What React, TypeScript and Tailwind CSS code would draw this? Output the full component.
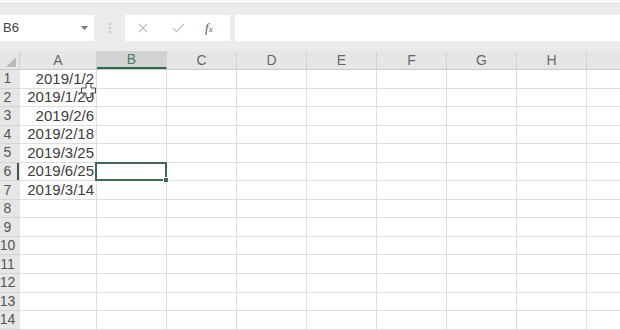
import React from "react";

const cols = [
  { name: "A", w: "w-[77px]" },
  { name: "B", w: "w-[70px]" },
  { name: "C", w: "w-[70px]" },
  { name: "D", w: "w-[70px]" },
  { name: "E", w: "w-[70px]" },
  { name: "F", w: "w-[70px]" },
  { name: "G", w: "w-[70px]" },
  { name: "H", w: "w-[70px]" },
  { name: "", w: "w-[40px]" },
];

const dates = ["2019/1/2", "2019/1/20", "2019/2/6", "2019/2/18", "2019/3/25", "2019/6/25", "2019/3/14"];

const rows = Array.from({ length: 14 }, (_, i) => i + 1);

const App: React.FC = () => {
  return (
    <div className="w-[620px] h-[330px] overflow-hidden bg-[#ebebeb] flex flex-col" style={{ fontFamily: '"Liberation Sans", Arial, sans-serif' }}>
      <div className="h-[4px] bg-[#f7f7f7] border-b border-[#dedede] shrink-0" />
      <div className="h-[11px] shrink-0" />

      {/* formula bar */}
      <div className="h-[26px] flex shrink-0">
        <div className="w-[94px] bg-white flex items-center justify-between pl-[3px] pr-[6px]">
          <span className="text-[13px] text-[#444]">B6</span>
          <svg width="7" height="4" viewBox="0 0 7 4">
            <polygon points="0,0 7,0 3.5,4" fill="#777" />
          </svg>
        </div>
        <div className="w-[31px] flex items-center justify-center">
          <div className="flex flex-col gap-[2px]">
            <span className="w-[2px] h-[2px] bg-[#c4c4c4]" />
            <span className="w-[2px] h-[2px] bg-[#c4c4c4]" />
            <span className="w-[2px] h-[2px] bg-[#c4c4c4]" />
          </div>
        </div>
        <div className="w-[105px] bg-white flex items-center">
          <svg className="ml-[13px]" width="10" height="10" viewBox="0 0 10 10">
            <path d="M1 1L9 9M9 1L1 9" stroke="#c2c2c2" strokeWidth="1.2" />
          </svg>
          <svg className="ml-[24px]" width="13" height="10" viewBox="0 0 13 10">
            <path d="M1 5L4.5 8.5L12 1" stroke="#c2c2c2" strokeWidth="1.3" fill="none" />
          </svg>
          <span className="ml-[20px] text-[13px] italic text-[#555]" style={{ fontFamily: '"Liberation Serif", serif' }}>
            f<span className="text-[9px]">x</span>
          </span>
        </div>
        <div className="w-[5px]" />
        <div className="flex-1 bg-white" />
      </div>

      <div className="h-[10px] shrink-0" />

      {/* grid */}
      <div className="flex-1 bg-white relative">
        {/* column headers */}
        <div className="flex h-[19px] bg-[#e6e6e6] border-b border-[#c8c8c8]">
          <div className="w-[20px] shrink-0 border-r border-[#cfcfcf] flex items-end justify-end pr-[3px] pb-[2px]">
            <svg width="10" height="10" viewBox="0 0 10 10">
              <polygon points="10,0 10,10 0,10" fill="#b9b9b9" />
            </svg>
          </div>
          {cols.map((c) => (
            <div
              key={c.name}
              className={`${c.w} shrink-0 flex items-center justify-center text-[14px] border-r border-[#d2d2d2] ${
                c.name === "B" ? "bg-[#d2d2d2] text-[#4f7a63] border-b-2 border-b-[#2f6a4a]" : "text-[#666]"
              }`}
            >
              {c.name}
            </div>
          ))}
        </div>

        {rows.map((r) => (
          <div key={r} className="flex h-[18.55px]">
            <div
              className={`w-[20px] shrink-0 bg-[#e6e6e6] border-b border-[#d4d4d4] relative ${
                r === 6 ? "bg-[#d6d6d6]" : ""
              }`}
            >
              <div className="w-[15px] h-full flex items-center justify-center text-[14px] text-[#555]">
                <span className="whitespace-nowrap">{r}</span>
              </div>
              {r === 6 && <div className="absolute right-[1px] top-0 bottom-0 w-[2px] bg-[#3d5a48]" />}
            </div>
            {cols.map((c, ci) => (
              <div
                key={c.name + r}
                className={`${c.w} shrink-0 border-r border-b border-[#dedede] relative flex items-center justify-end pr-[2px] text-[15px] text-[#3c3c3c] whitespace-nowrap`}
              >
                {ci === 0 && r <= 7 ? dates[r - 1] : ""}
                {ci === 1 && r === 6 && (
                  <div className="absolute z-10 -left-[2px] -top-[1px] -right-[1px] -bottom-[1px] border-2 border-[#3d6a50]">
                    <div className="absolute -right-[4px] -bottom-[4px] w-[6px] h-[6px] bg-[#3d6a50] border border-white" />
                  </div>
                )}
              </div>
            ))}
          </div>
        ))}

        {/* mouse cursor */}
        <svg className="absolute z-20 left-[81px] top-[32px]" width="15" height="15" viewBox="0 0 15 15">
          <path
            d="M5 0.5H10V5H14.5V10H10V14.5H5V10H0.5V5H5Z"
            fill="#fff"
            stroke="#444"
            strokeWidth="1"
          />
        </svg>
      </div>
    </div>
  );
};

export default App;
